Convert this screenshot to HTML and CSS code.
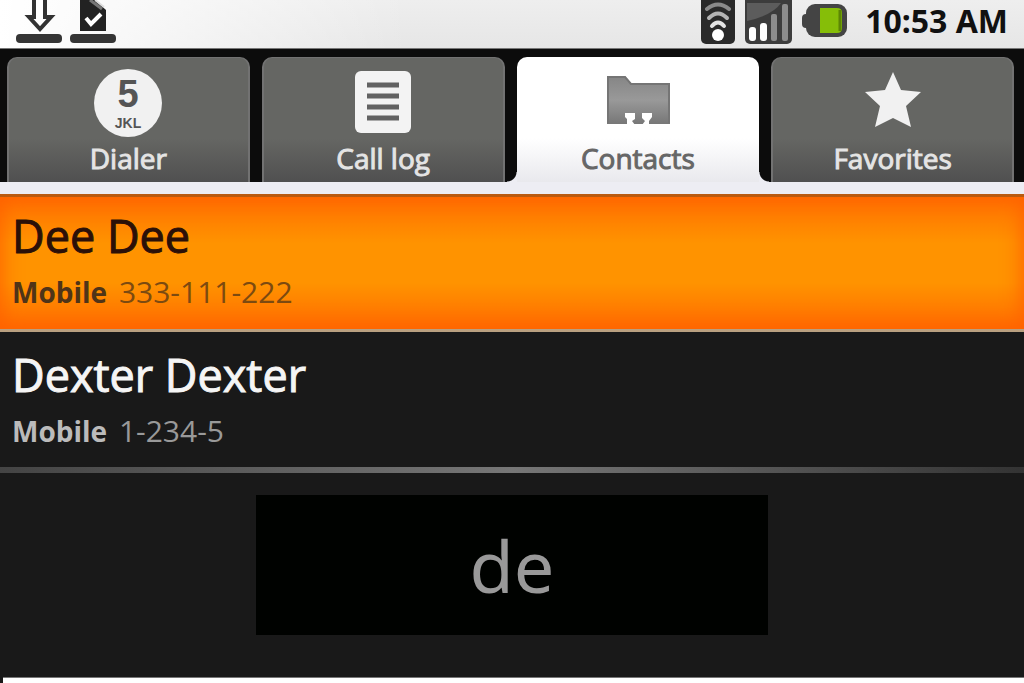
FILE: index.html
```html
<!doctype html>
<html lang="en">
	<head>
		<meta charset="UTF-8">
		<meta name="viewport" content="width=device-width, initial-scale=1">
		<title>Contacts</title>
		<link rel="stylesheet" href="styles.css">
	</head>
	<body>
		<header class="status">
			<div class="notices">
				<svg width="46" height="44" viewBox="0 0 46 44">
					<path d="M18 -4V17H13L24 29L35 17H29V-4Z" fill="#fff" stroke="#333" stroke-width="4"/>
					<rect x="0" y="34" width="46" height="9" rx="4" fill="#353535"/>
				</svg>
				<svg width="46" height="44" viewBox="0 0 46 44">
					<path d="M10 0H25L36 10V31H10Z" fill="#222"/>
					<path d="M20 0L32 9" stroke="#777" stroke-width="3"/>
					<path d="M25 0L34 7" stroke="#ddd" stroke-width="2"/>
					<path d="M16 18L21 24L31 14" fill="none" stroke="#fff" stroke-width="4"/>
					<rect x="0" y="34" width="46" height="9" rx="4" fill="#353535"/>
				</svg>
			</div>
			<div class="system">
				<svg width="34" height="44" viewBox="0 0 34 44">
					<rect x="0" y="-6" width="34" height="50" rx="5" fill="#2a2a2a"/>
					<g fill="none" stroke-width="4" stroke-linecap="round">
						<path d="M6 9Q17 0 28 9" stroke="#8a8a8a"/>
						<path d="M8 18Q17 9 26 18" stroke="#b5b5b5"/>
						<path d="M11 26Q17 19 23 26" stroke="#e4e4e4"/>
					</g>
					<circle cx="17" cy="35" r="6" fill="#fff"/>
				</svg>
				<svg width="47" height="44" viewBox="0 0 47 44">
					<rect x="0" y="-6" width="47" height="50" rx="5" fill="#3c3c3c"/>
					<path d="M2 21Q28 15 36 3H2Z" fill="#5c5c5c"/>
					<rect x="4" y="27" width="7" height="14" rx="3" fill="#fff"/>
					<rect x="15" y="23" width="7" height="18" rx="3" fill="#fff"/>
					<rect x="26" y="14" width="6" height="27" rx="2" fill="#8c8c8c"/>
					<rect x="37" y="4" width="6" height="37" rx="2" fill="#8c8c8c"/>
				</svg>
				<svg width="45" height="44" viewBox="0 0 45 44">
					<rect x="0" y="14" width="9" height="14" rx="4" fill="#444"/>
					<rect x="4" y="4" width="41" height="33" rx="9" fill="#444"/>
					<path d="M18 8H35Q40 8 40 13V28Q40 33 35 33H18Z" fill="#86be08"/>
					<path d="M38 10V31" stroke="#5c8505" stroke-width="3"/>
				</svg>
				<time class="clock" datetime="10:53">10:53 AM</time>
			</div>
		</header>
		<nav class="tabs">
			<a class="tab" href="#dialer">
				<svg width="68" height="68" viewBox="0 0 68 68">
					<circle cx="34" cy="34" r="34" fill="#f1f1f1"/>
					<text class="key" x="34" y="38" text-anchor="middle">5</text>
					<text class="letters" x="34" y="59" text-anchor="middle">JKL</text>
				</svg>
				<span>Dialer</span>
			</a>
			<a class="tab" href="#calllog">
				<svg width="68" height="68" viewBox="0 0 68 68">
					<rect x="6" y="2" width="56" height="62" rx="6" fill="#f3f3f3"/>
					<path d="M18 16H50M18 27H50M18 38H50M18 49H50" stroke="#626262" stroke-width="5"/>
				</svg>
				<span>Call log</span>
			</a>
			<a class="tab active" href="#contacts" aria-current="page">
				<svg width="68" height="68" viewBox="0 0 68 68">
					<defs>
						<linearGradient id="folder" x1="0" y1="0" x2="0" y2="1">
							<stop offset="0" stop-color="#858585"/>
							<stop offset=".5" stop-color="#999"/>
							<stop offset="1" stop-color="#777"/>
						</linearGradient>
					</defs>
					<path d="M3 7H21L27 14H66V55H3Z" fill="url(#folder)"/>
					<path d="M4 54V8H21L27 15H65V54" fill="none" stroke="#757575" stroke-width="2"/>
					<path d="M21 44H31V50L28 52L31 56H23V50L21 48ZM38 44H48V48L45 52V56H38L41 52L38 49Z" fill="#fff"/>
				</svg>
				<span>Contacts</span>
			</a>
			<a class="tab" href="#favorites">
				<svg width="68" height="68" viewBox="0 0 68 68">
					<path d="M34 3L42 21L62 23L47 37L52 58L34 49L16 58L21 37L6 23L26 21Z" fill="#f1f1f1"/>
				</svg>
				<span>Favorites</span>
			</a>
		</nav>
		<main class="content">
			<ul class="contacts">
				<li>
					<a class="contact selected" href="#dee">
						<span class="name">Dee Dee</span>
						<span class="phone"><b>Mobile</b> 333-111-222</span>
					</a>
				</li>
				<li>
					<a class="contact" href="#dexter">
						<span class="name">Dexter Dexter</span>
						<span class="phone"><b>Mobile</b> 1-234-5</span>
					</a>
				</li>
			</ul>
			<div class="filter">de</div>
		</main>
		<footer class="edge"></footer>
	</body>
</html>
```
FILE: styles.css
```css
*{margin:0;padding:0;box-sizing:border-box;}
body{
	min-height:100vh;
	display:flex;
	flex-direction:column;
	background:#191919;
	font-family:"Open Sans","Noto Sans",sans-serif;
}
a{color:inherit;text-decoration:none;}
svg{display:block;}

.status{
	height:49px;
	padding:0 16px 5px;
	display:flex;
	justify-content:space-between;
	background:linear-gradient(to right,#fff,rgba(255,255,255,0) 40%),linear-gradient(#eee,#e6e6e6);
	border-bottom:1px solid #777;
}
.notices{display:flex;gap:8px;}
.system{display:flex;gap:10px;}
.clock{
	margin-left:8px;
	font-family:"Noto Sans",sans-serif;
	font-size:32px;
	line-height:42px;
	font-weight:bold;
	color:#111;
	white-space:nowrap;
}

.tabs{
	padding:8px 10px 0 7px;
	display:grid;
	grid-template-columns:repeat(4,1fr);
	gap:12px;
	background:#0c0c0c;
	border-bottom:12px solid #ededf3;
}
.tab{
	height:125px;
	padding-top:11px;
	display:flex;
	flex-direction:column;
	align-items:center;
	font-size:28px;
	line-height:42px;
	color:#e4e4e4;
	-webkit-text-stroke:1px;
	background:linear-gradient(#656663 65%,#505050);
	border:solid #727272;
	border-width:1px 2px 0;
	border-radius:10px 10px 0 0;
}
.tab.active{
	position:relative;
	color:#666;
	background:linear-gradient(#fff 65%,#e9e9ed);
	border:0;
	padding-top:12px;
}
/* flared feet of the open tab */
.tab.active::before,.tab.active::after{
	content:"";
	position:absolute;
	bottom:0;
	width:10px;
	height:10px;
}
.tab.active::before{
	right:100%;
	background:radial-gradient(circle at 0 0,#0c0c0c 9px,#ededf3 10px);
}
.tab.active::after{
	left:100%;
	background:radial-gradient(circle at 100% 0,#0c0c0c 9px,#ededf3 10px);
}
.key,.letters{
	font-family:"Liberation Sans",sans-serif;
	font-weight:bold;
	fill:#555;
	-webkit-text-stroke:0;
}
.key{font-size:38px;}
.letters{font-size:14px;}

.content{
	flex:1;
	display:flex;
	flex-direction:column;
}
.contacts{list-style:none;}
.contact{
	height:141px;
	padding:15px 12px 0;
	display:flex;
	flex-direction:column;
	border-bottom:6px solid;
	border-image:linear-gradient(to right,#444,#777 50%,#333) 1;
	color:#f5f5f5;
}
.contact.selected{
	height:138px;
	padding-top:11px;
	background:linear-gradient(#ff7000,#ff9300 35%,#ff9300 65%,#ff6c00);
	border-top:3px solid;
	border-bottom:3px solid;
	border-image:linear-gradient(#b95a10,#b9a080) 1;
	box-shadow:inset 0 0 20px 2px #ff6200;
	color:#2b1008;
}
.name{
	font-size:45px;
	line-height:56px;
	-webkit-text-stroke:1px;
}
.phone{
	font-size:30px;
	line-height:56px;
	color:#999;
}
.phone b{
	margin-right:4px;
	font-size:28px;
	color:#bbb;
}
.selected .phone{color:#7c4a10;}
.selected .phone b{color:#4f3418;}

.filter{
	width:50%;
	margin:22px auto;
	padding:30px 0;
	background:#000200;
	color:#999;
	font-family:"Noto Sans",sans-serif;
	font-size:72px;
	line-height:80px;
	text-align:center;
}
.edge{
	height:6px;
	margin-left:3px;
	background:#fff;
	border-top:1px solid #777;
}
```
